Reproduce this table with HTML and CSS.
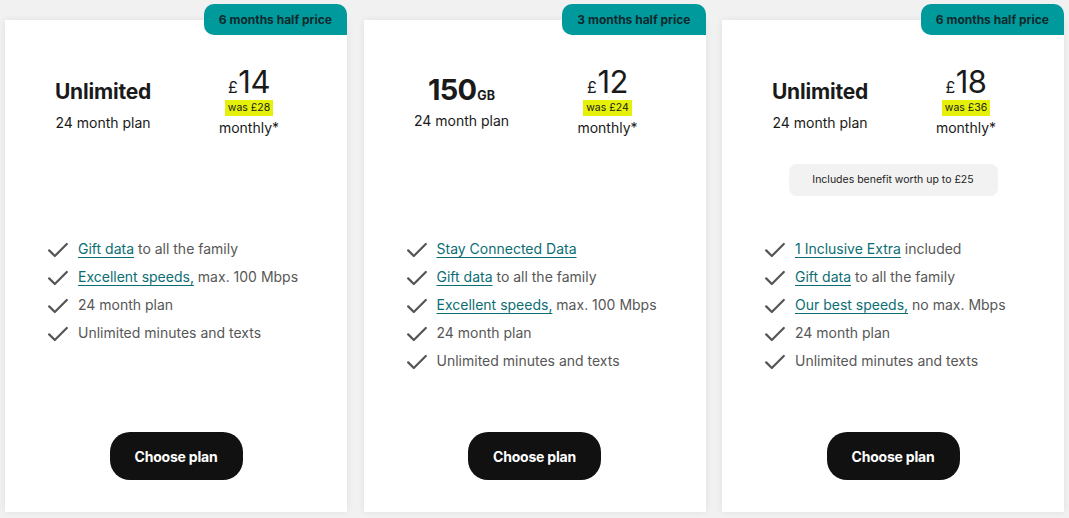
FILE: index.html
```html
<!DOCTYPE html>
<html lang="en">
<head>
<meta charset="utf-8">
<title>Plans</title>
<link rel="stylesheet" href="styles.css">
</head>
<body>
<svg width="0" height="0" class="defs" aria-hidden="true">
  <symbol id="tick" viewBox="0 0 20 16">
    <path d="M1.2 8.4 L6.8 14 L18.8 2" fill="none" stroke="currentColor" stroke-width="2.2" stroke-linecap="round" stroke-linejoin="round"/>
  </symbol>
</svg>
<main class="plans">
  <section class="card">
    <div class="badge">6 months half price</div>
    <div class="head">
      <div class="cols">
        <div class="name-col">
          <div class="name">Unlimited</div>
          <div class="term">24 month plan</div>
        </div>
        <div class="price-col">
          <div class="price"><span class="cur">£</span>14</div>
          <div class="was"><span>was £28</span></div>
          <div class="per">monthly*</div>
        </div>
      </div>
    </div>
    <ul class="features">
      <li><svg class="tick"><use href="#tick"/></svg><span><a href="#">Gift data</a> to all the family</span></li>
      <li><svg class="tick"><use href="#tick"/></svg><span><a href="#">Excellent speeds,</a> max. 100 Mbps</span></li>
      <li><svg class="tick"><use href="#tick"/></svg><span>24 month plan</span></li>
      <li><svg class="tick"><use href="#tick"/></svg><span>Unlimited minutes and texts</span></li>
    </ul>
    <button class="choose">Choose plan</button>
  </section>

  <section class="card">
    <div class="badge">3 months half price</div>
    <div class="head">
      <div class="cols">
        <div class="name-col">
          <div class="name big">150<small>GB</small></div>
          <div class="term">24 month plan</div>
        </div>
        <div class="price-col">
          <div class="price"><span class="cur">£</span>12</div>
          <div class="was"><span>was £24</span></div>
          <div class="per">monthly*</div>
        </div>
      </div>
    </div>
    <ul class="features">
      <li><svg class="tick"><use href="#tick"/></svg><span><a href="#">Stay Connected Data</a></span></li>
      <li><svg class="tick"><use href="#tick"/></svg><span><a href="#">Gift data</a> to all the family</span></li>
      <li><svg class="tick"><use href="#tick"/></svg><span><a href="#">Excellent speeds,</a> max. 100 Mbps</span></li>
      <li><svg class="tick"><use href="#tick"/></svg><span>24 month plan</span></li>
      <li><svg class="tick"><use href="#tick"/></svg><span>Unlimited minutes and texts</span></li>
    </ul>
    <button class="choose">Choose plan</button>
  </section>

  <section class="card">
    <div class="badge">6 months half price</div>
    <div class="head">
      <div class="cols">
        <div class="name-col">
          <div class="name">Unlimited</div>
          <div class="term">24 month plan</div>
        </div>
        <div class="price-col">
          <div class="price"><span class="cur">£</span>18</div>
          <div class="was"><span>was £36</span></div>
          <div class="per">monthly*</div>
        </div>
      </div>
      <div class="benefit">Includes benefit worth up to £25</div>
    </div>
    <ul class="features">
      <li><svg class="tick"><use href="#tick"/></svg><span><a href="#">1 Inclusive Extra</a> included</span></li>
      <li><svg class="tick"><use href="#tick"/></svg><span><a href="#">Gift data</a> to all the family</span></li>
      <li><svg class="tick"><use href="#tick"/></svg><span><a href="#">Our best speeds,</a> no max. Mbps</span></li>
      <li><svg class="tick"><use href="#tick"/></svg><span>24 month plan</span></li>
      <li><svg class="tick"><use href="#tick"/></svg><span>Unlimited minutes and texts</span></li>
    </ul>
    <button class="choose">Choose plan</button>
  </section>
</main>
</body>
</html>
```

FILE: styles.css
```css
* { box-sizing: border-box; }

html, body {
  margin: 0;
  background: #f1f1f1;
}

body {
  font-family: Inter, "Noto Sans", "Liberation Sans", sans-serif;
  color: #1a1a1a;
  padding: 20px 5px 6px 5px;
}

.defs { position: absolute; }

.plans {
  display: grid;
  grid-template-columns: repeat(3, 342px);
  column-gap: 16.5px;
}

.card {
  position: relative;
  background: #ffffff;
  height: 492px;
  display: flex;
  flex-direction: column;
  align-items: stretch;
  box-shadow: 0 0 7px rgba(0, 0, 0, 0.07);
  padding-bottom: 32px;
}

.badge {
  position: absolute;
  top: -16px;
  right: 0;
  height: 31px;
  line-height: 31px;
  padding: 0 15px;
  background: #00999c;
  color: #0f2a2c;
  font-size: 12px;
  font-weight: 700;
  border-radius: 10px 10px 0 10px;
}

.head {
  height: 214px;
  padding: 45px 25px 0;
  display: flex;
  flex-direction: column;
  align-items: center;
}

.cols {
  align-self: stretch;
  display: grid;
  grid-template-columns: 1fr 1fr;
  align-items: start;
}

.name-col {
  margin-top: 15px;
  text-align: center;
}

.name {
  font-size: 21px;
  line-height: 24px;
  height: 24px;
  font-weight: 700;
  letter-spacing: -0.2px;
}

.name.big {
  font-size: 29px;
  letter-spacing: -0.8px;
  margin-top: -2px;
}

.name small {
  font-size: 12.5px;
  line-height: 1;
  letter-spacing: 0;
  margin-left: 1px;
}

.term {
  margin-top: 9px;
  font-size: 14px;
  line-height: 20px;
}

.price-col {
  text-align: center;
}

.price {
  font-size: 31px;
  line-height: 34px;
  height: 34px;
  font-weight: 400;
  letter-spacing: -0.5px;
}

.price .cur {
  font-size: 16px;
  line-height: 1;
  margin-right: 1px;
}

.was {
  margin-top: 1px;
  display: flex;
  justify-content: center;
}

.was span {
  display: block;
  background: #e5f10a;
  font-size: 10.5px;
  line-height: 16px;
  padding: 0 3px;
  color: #1a1a1a;
}

.per {
  margin-top: 2px;
  font-size: 14px;
  line-height: 20px;
}

.benefit {
  margin-top: 26px;
  width: 209px;
  height: 32px;
  line-height: 32px;
  text-align: center;
  background: #f2f2f2;
  border-radius: 8px;
  font-size: 10.5px;
  color: #222;
}

.features {
  list-style: none;
  margin: 0;
  padding: 0 0 0 43px;
}

.features li {
  display: flex;
  align-items: center;
  height: 28px;
  font-size: 14px;
  color: #575757;
}

.tick {
  width: 20px;
  height: 16px;
  color: #555555;
  margin-right: 10px;
  flex: none;
  position: relative;
  top: 2px;
}

.features a {
  color: #0b6e74;
  text-decoration: underline;
  text-decoration-thickness: 1px;
  text-underline-offset: 3px;
}

.choose {
  margin: auto auto 0;
  width: 133px;
  height: 48px;
  border: 0;
  border-radius: 20px;
  background: #111111;
  color: #ffffff;
  font-family: inherit;
  font-size: 14px;
  font-weight: 700;
  letter-spacing: -0.2px;
}
```
